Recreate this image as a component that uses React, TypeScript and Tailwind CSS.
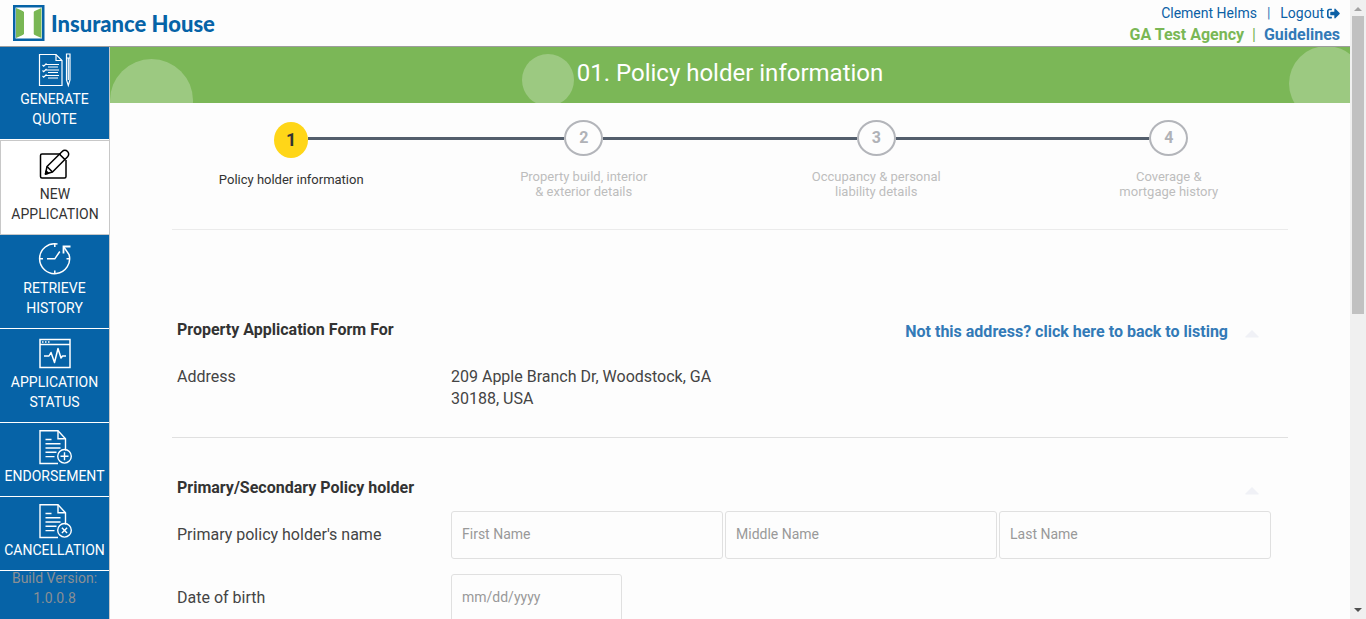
import React from "react";
import { FaSignOutAlt } from "react-icons/fa";

const iconClass = "h-9 w-9 shrink-0";

function QuoteIcon() {
  return (
    <svg className={iconClass} viewBox="0 0 36 36" fill="none" stroke="currentColor" strokeWidth="1.2" aria-hidden="true">
      <path d="M2.500 1.500H19l6 6v25H2.500z" />
      <path d="M19 1.500v6h6" />
      <path d="M5.500 12l1.200 1.200L9.500 10.500M5.500 17.500l1.200 1.200L9.500 16M5.500 23l1.200 1.200L9.500 21.500" />
      <path d="M9 11.500h13M11 14h10M9 17h13M11 19.500h10M9 22.500h13M11 25h10" strokeWidth="1" />
      <path d="M29.500 1H33v26l-1.700 5.500L29.500 27zM29.500 5H33M31.300 5.500V27" />
    </svg>
  );
}

function PencilBoxIcon() {
  return (
    <svg className={iconClass} viewBox="0 0 36 36" fill="none" stroke="currentColor" strokeWidth="1.5" strokeLinejoin="round" aria-hidden="true">
      <path d="M24 6H5a1.500 1.500 0 0 0-1.500 1.500v21A1.500 1.500 0 0 0 5 30h22.500a1.500 1.500 0 0 0 1.500-1.500V12" />
      <path d="M8.500 26l1.500-7.500L25.200 3.500a3.600 3.600 0 0 1 5.400 5.300L15.500 24z" />
      <path d="M10 18.500l5.500 5.500M22.500 6.200l5.500 5.400" />
      <path d="M8.500 26l.7-3 2.200 2.200z" fill="currentColor" />
    </svg>
  );
}

function HistoryIcon() {
  return (
    <svg className={iconClass} viewBox="0 0 36 36" fill="none" stroke="currentColor" strokeWidth="1.5" aria-hidden="true">
      <path d="M20.500 2A15 15 0 1 0 32 12.500L26.500 4.500" />
      <path d="M33.500 4.500h-7v7" strokeWidth="1.800" />
      <path d="M10 16.800h7.800l5-7.300" />
      <path d="M17.800 1.500V5M2.500 16.800H6M17.800 28.500V32M29.500 16.800H33" />
    </svg>
  );
}

function StatusIcon() {
  return (
    <svg className={iconClass} viewBox="0 0 36 36" fill="none" stroke="currentColor" strokeWidth="1.500" aria-hidden="true">
      <path d="M3 3.500h30v28H3zM3 8.500h30" />
      <path d="M5 6h1.500M8 6h1.500M11 6h1.500" />
      <path d="M7 20h5l2-3.500 3.500 10 3.500-14 3 9.500 1.500-2H29" strokeLinejoin="round" />
    </svg>
  );
}

function DocumentIcon({ mark }: { mark: string }) {
  return (
    <svg className={iconClass} viewBox="0 0 36 36" fill="none" stroke="currentColor" strokeWidth="1.400" aria-hidden="true">
      <path d="M21 33.500H3V.8h18l7.500 8V20.500" />
      <path d="M21 .8v8h7.500" />
      <path d="M8.500 9.500h6M8.500 13.800h15M8.500 18h15M8.500 22.300h11M8.500 26.600h9" />
      <circle cx="27.500" cy="26.300" r="6.800" />
      <path d={mark} />
    </svg>
  );
}

type Item = { label: string; icon: React.ReactNode; active?: boolean };

const items: Item[] = [
  { label: "GENERATE QUOTE", icon: <QuoteIcon /> },
  { label: "NEW APPLICATION", icon: <PencilBoxIcon />, active: true },
  { label: "RETRIEVE HISTORY", icon: <HistoryIcon /> },
  { label: "APPLICATION STATUS", icon: <StatusIcon /> },
  { label: "ENDORSEMENT", icon: <DocumentIcon mark="M27.500 22.300v8M23.500 26.300h8" /> },
  { label: "CANCELLATION", icon: <DocumentIcon mark="M24.900 23.700l5.200 5.200M30.100 23.700l-5.200 5.200" /> },
];

const steps = [
  ["Policy holder information"],
  ["Property build, interior", "& exterior details"],
  ["Occupancy & personal", "liability details"],
  ["Coverage &", "mortgage history"],
];

function Logo() {
  return (
    <a href="#home" className="flex items-center gap-1.5 text-[#0663a7]">
      <svg className="h-9 w-8" viewBox="0 0 32 36" aria-hidden="true">
        <path fill="#0663a7" d="M0 0h31.500v36H0z" />
        <path fill="#fff" d="M2.500 2.500h26.500v31H2.500z" />
        <path fill="#7ab755" d="M3 3l8 3.500v23L3 33zM28.500 3l-8 3.500v23l8 3.500z" />
        <path fill="#fff" d="M7 3h17.500l-4 4v22l4 4H7l4-4V7z" />
      </svg>
      <span className="pt-0.5 font-[Lato] text-[22px] leading-7 font-black">Insurance House</span>
    </a>
  );
}

function Sidebar() {
  return (
    <nav className="w-[110px] shrink-0 border-r border-[#c8c8c8] bg-[#0663a7] text-center text-sm leading-5 text-white">
      {items.map((item) => (
        <a
          key={item.label}
          href={"#" + item.label.toLowerCase().replace(" ", "-")}
          className={
            item.active
              ? "flex flex-col items-center border border-r-0 border-[#c8c8c8] bg-white pt-[7px] pb-2.5 text-[#333]"
              : "flex flex-col items-center border-b border-white pt-[7px] pb-2.5"
          }
        >
          <span className={item.active ? "text-black" : ""}>{item.icon}</span>
          {item.label.split(" ").map((word) => (
            <span key={word}>{word}</span>
          ))}
        </a>
      ))}
      <p className="-mt-[3px] text-[#8a8f94]">
        Build Version:
        <br />
        1.0.0.8
      </p>
    </nav>
  );
}

function Stepper() {
  return (
    <ol className="grid grid-cols-4 pt-[17px] text-center text-[13px] leading-[15px]">
      {steps.map((lines, i) => (
        <li key={lines[0]} className={i === 0 ? "text-[#333]" : "text-[#bdbdbd]"}>
          <div className="flex items-start">
            <span className={i === 0 ? "flex-1" : "mt-[17px] h-[3px] flex-1 bg-[#535e6c]"} />
            {i === 0 ? (
              <span className="mt-0.5 flex h-9 w-[34px] items-center justify-center rounded-[50%] bg-[#ffd618] text-lg font-bold">1</span>
            ) : (
              <span className="flex h-9 w-[39px] items-center justify-center rounded-[50%] border-2 border-[#b3b5ba] text-base font-bold text-[#b0b2b7]">
                {i + 1}
              </span>
            )}
            <span className={i === 3 ? "flex-1" : "mt-[17px] h-[3px] flex-1 bg-[#535e6c]"} />
          </div>
          <p className={i === 0 ? "pt-3.5" : "pt-[13px]"}>
            {lines.map((line) => (
              <span key={line} className="block">
                {line}
              </span>
            ))}
          </p>
        </li>
      ))}
    </ol>
  );
}

function Caret() {
  return (
    <button type="button" aria-label="Collapse section" className="mt-1 block text-[#f0f1f6]">
      <svg className="h-2 w-3.5" viewBox="0 0 14 8" fill="currentColor" aria-hidden="true">
        <path d="M7 0l6.500 6.500v1H.5v-1z" />
      </svg>
    </button>
  );
}

const inputClass =
  "h-12 rounded-[3px] border border-[#e0e0e0] bg-transparent px-2.5 pb-[3px] text-sm text-[#333] placeholder:text-[#999] outline-none";

export default function App() {
  return (
    <div className="flex h-screen overflow-hidden bg-[#fdfdfd] font-[Roboto,sans-serif] text-[#333]">
      <div className="flex min-w-0 flex-1 flex-col">
        <header className="relative z-10 -mb-px flex h-[47px] shrink-0 items-start justify-between border-b border-[#9d9d9d] bg-[#fdfdfd] pt-[5px] pr-2.5 pl-[13px]">
          <Logo />
          <div className="text-right text-sm leading-4 text-[#0b5fa5]">
            <div className="flex justify-end">
              <a href="#profile">Clement Helms</a>
              <span className="px-2.5 text-[#337ab7]">|</span>
              <a href="#logout" className="flex items-center gap-[3px]">
                Logout
                <FaSignOutAlt className="size-[13px]" />
              </a>
            </div>
            <div className="pt-[3px] text-base leading-[22px] font-bold text-[#7ab755]">
              <a href="#agency">GA Test Agency</a>
              <span className="px-2 font-normal">|</span>
              <a href="#guidelines" className="text-[#337ab7]">
                Guidelines
              </a>
            </div>
          </div>
        </header>

        <div className="flex min-h-0 flex-1">
          <Sidebar />
          <main className="min-w-0 flex-1 overflow-hidden">
            <div className="relative overflow-hidden bg-[#7bb757] pt-2.5 pb-[13px]">
              <span className="absolute top-[13px] left-0 size-[83px] rounded-full bg-white/25" />
              <span className="absolute top-2 left-[412px] size-[52px] rounded-full bg-white/25" />
              <span className="absolute top-0 -right-3.5 size-[75px] rounded-full bg-white/25" />
              <h1 className="relative text-center text-2xl leading-[34px] text-white">01. Policy holder information</h1>
            </div>

            <div className="mx-auto max-w-[1170px]">
              <Stepper />
            </div>

            <form className="mx-auto mt-[30px] max-w-[1116px] border-t border-[#ebebeb] text-base leading-[22px]">
              <section className="border-b border-[#e0e0e0] px-[5px] pt-[89px] pb-[27px]">
                <div className="flex items-start justify-between pr-6">
                  <h2 className="font-bold">Property Application Form For</h2>
                  <div className="flex items-center gap-[17px] pt-0.5">
                    <a href="#listing" className="font-bold text-[#337ab7]">
                      Not this address? click here to back to listing
                    </a>
                    <Caret />
                  </div>
                </div>
                <div className="flex pt-[23px] text-[#444]">
                  <span className="w-[274px] shrink-0">Address</span>
                  <address className="w-[272px] not-italic">209 Apple Branch Dr, Woodstock, GA 30188, USA</address>
                </div>
              </section>

              <section className="px-[5px] pt-[39px]">
                <div className="flex items-center justify-between pr-6">
                  <h2 className="font-bold">Primary/Secondary Policy holder</h2>
                  <div className="pt-0.5">
                    <Caret />
                  </div>
                </div>
                <div className="flex items-center pt-3 pr-3 text-[#444]">
                  <label htmlFor="first" className="w-[274px] shrink-0">
                    Primary policy holder's name
                  </label>
                  <div className="grid flex-1 grid-cols-3 gap-0.5">
                    <input id="first" className={inputClass} placeholder="First Name" />
                    <input aria-label="Middle Name" className={inputClass} placeholder="Middle Name" />
                    <input aria-label="Last Name" className={inputClass} placeholder="Last Name" />
                  </div>
                </div>
                <div className="flex items-center pt-[15px] text-[#444]">
                  <label htmlFor="birth" className="w-[274px] shrink-0">
                    Date of birth
                  </label>
                  <input id="birth" className={inputClass + " w-[171px]"} placeholder="mm/dd/yyyy" />
                </div>
              </section>
            </form>
          </main>
        </div>
      </div>

      <div aria-hidden="true" className="flex w-4 shrink-0 flex-col items-center justify-between bg-[#f0f0f0]">
        <div className="flex w-full flex-col items-center">
          <svg className="h-4 w-4 shrink-0" viewBox="0 0 16 16">
            <path fill="#a3a3a3" d="M8 7l4 4H4z" />
          </svg>
          <span className="h-[298px] w-3 bg-[#c1c1c1]" />
        </div>
        <svg className="h-4 w-4 shrink-0" viewBox="0 0 16 16">
          <path fill="#505050" d="M8 9L4 5h8z" />
        </svg>
      </div>
    </div>
  );
}
